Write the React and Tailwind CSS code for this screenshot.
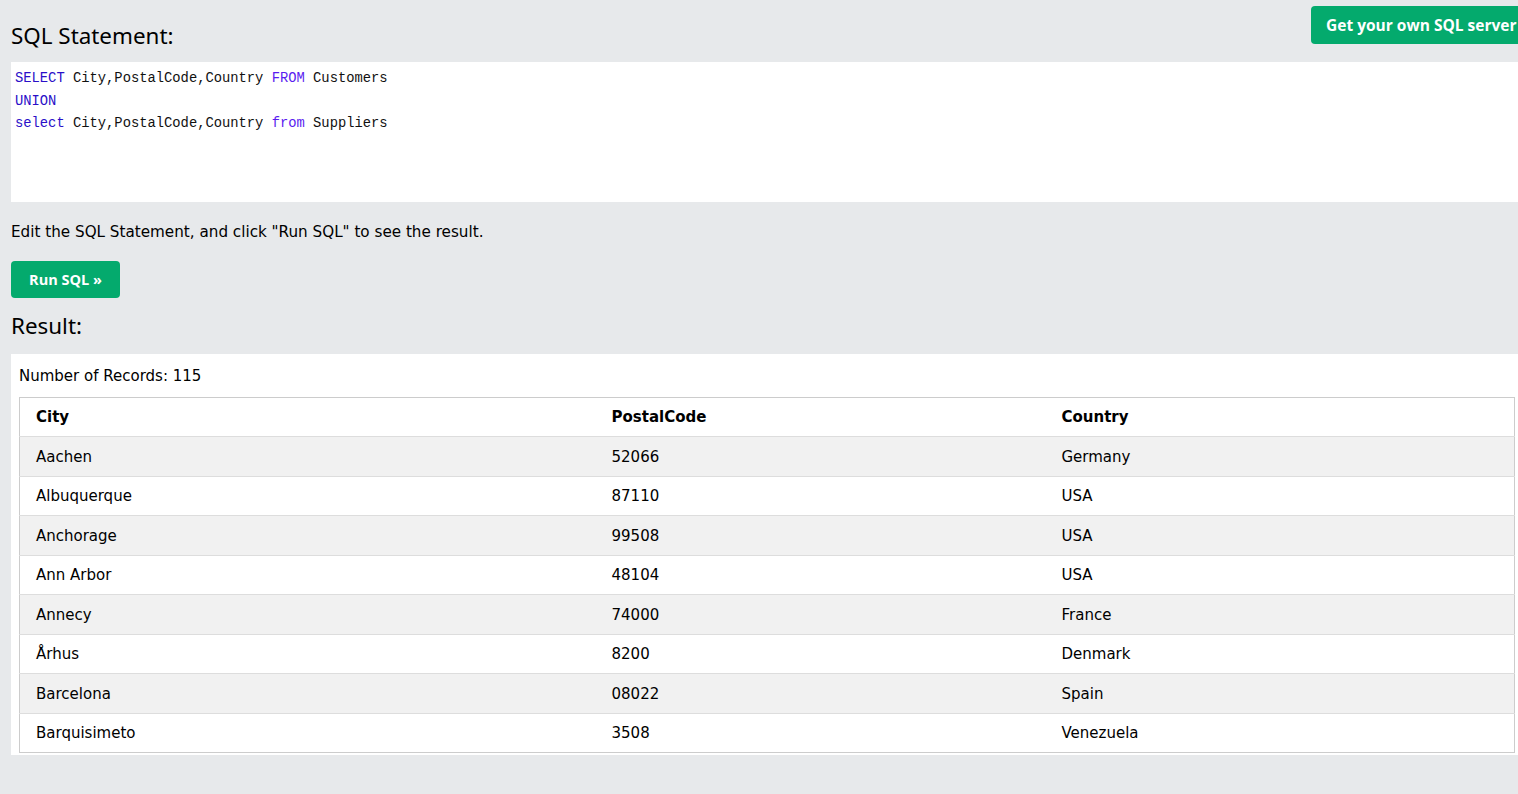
import React from "react";

const rows = [
  ["Aachen", "52066", "Germany"],
  ["Albuquerque", "87110", "USA"],
  ["Anchorage", "99508", "USA"],
  ["Ann Arbor", "48104", "USA"],
  ["Annecy", "74000", "France"],
  ["Århus", "8200", "Denmark"],
  ["Barcelona", "08022", "Spain"],
  ["Barquisimeto", "3508", "Venezuela"],
];

const headFont = { fontFamily: '"Noto Sans", "Open Sans", sans-serif' };
const bodyFont = { fontFamily: '"DejaVu Sans", Verdana, sans-serif' };
const btnFont = { fontFamily: '"Open Sans", "Noto Sans", sans-serif' };

const App = () => {
  return (
    <div className="min-h-screen w-full overflow-hidden bg-[#e7e9eb] text-black">
      <div className="w-[1540px] pl-[11px]">
        {/* Top: heading + server button (runs past the right edge) */}
        <div className="flex items-start justify-between">
          <h2 className="pt-[19px] pb-[10px] text-[22.4px] leading-[33px]" style={headFont}>
            SQL Statement:
          </h2>
          <button
            className="mt-[6px] h-[38px] w-[229px] rounded-[4px] bg-[#04aa6d] pl-[15px] pt-[1px] text-left text-[15.5px] font-bold text-white"
            style={btnFont}
          >
            Get your own SQL server
          </button>
        </div>

        {/* Code box */}
        <div
          className="h-[140px] bg-white px-[4px] pt-[6px] text-[13.8px] leading-[22.5px] text-[#111]"
          style={{ fontFamily: '"Liberation Mono", "DejaVu Sans Mono", monospace' }}
        >
          <div>
            <span className="text-[#2a0fc8]">SELECT</span> City,PostalCode,Country{" "}
            <span className="text-[#5a1cf0]">FROM</span> Customers
          </div>
          <div>
            <span className="text-[#2a0fc8]">UNION</span>
          </div>
          <div>
            <span className="text-[#2a0fc8]">select</span> City,PostalCode,Country{" "}
            <span className="text-[#5a1cf0]">from</span> Suppliers
          </div>
        </div>

        <p className="mt-[20px] text-[15.2px] leading-[20px]" style={bodyFont}>
          Edit the SQL Statement, and click "Run SQL" to see the result.
        </p>

        <button
          className="mt-[19px] h-[37px] w-[109px] rounded-[4px] bg-[#04aa6d] text-[14.5px] font-bold text-white"
          style={btnFont}
        >
          Run SQL »
        </button>

        <h2 className="pt-[11px] pb-[12px] text-[22.4px] leading-[33px]" style={headFont}>
          Result:
        </h2>

        {/* Result box */}
        <div className="w-[1507px] bg-white pl-[8px] pr-[3px] pt-[13px] pb-[2px]" style={bodyFont}>
          <div className="mb-[11px] text-[15px] leading-[19px]">Number of Records: 115</div>
          <table className="w-full border-collapse border border-[#cccccc] text-[15px]">
            <thead>
              <tr className="h-[39px]">
                <th className="w-[575px] pl-[16px] pt-[1px] text-left font-bold">City</th>
                <th className="w-[450px] pl-[17px] pt-[1px] text-left font-bold">PostalCode</th>
                <th className="pl-[17px] pt-[1px] text-left font-bold">Country</th>
              </tr>
            </thead>
            <tbody>
              {rows.map((r, i) => (
                <tr
                  key={r[0]}
                  className={`h-[39.5px] border-t border-[#dddddd] ${
                    i % 2 === 0 ? "bg-[#f1f1f1]" : "bg-white"
                  }`}
                >
                  <td className="pl-[16px] pt-[1px]">{r[0]}</td>
                  <td className="pl-[17px] pt-[1px]">{r[1]}</td>
                  <td className="pl-[17px] pt-[1px]">{r[2]}</td>
                </tr>
              ))}
            </tbody>
          </table>
        </div>
      </div>
    </div>
  );
};

export default App;
